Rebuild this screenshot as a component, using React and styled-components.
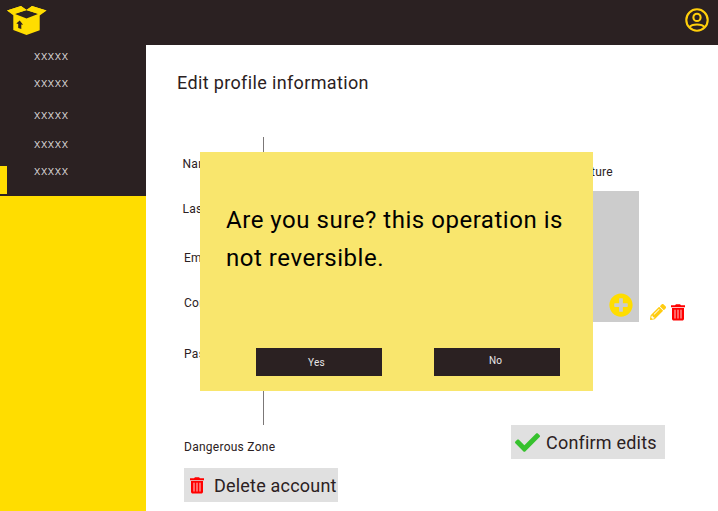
import React from "react";
import styled, { createGlobalStyle } from "styled-components";
import { FaPlusCircle, FaPencilAlt, FaCheck } from "react-icons/fa";

const GlobalStyle = createGlobalStyle`
  *, *::before, *::after { box-sizing: border-box; }
  body { margin: 0; background: #fff; font-family: Roboto, "Noto Sans", sans-serif; color: #2b2122; }
  button { font: inherit; color: inherit; border: 0; padding: 0; margin: 0; }
  svg { display: block; flex: none; }
`;

const Page = styled.div`
  position: relative;
  width: 718px;
  height: 511px;
  display: grid;
  grid-template: 44.6px 1fr / 146px 1fr;
  overflow: hidden;
  background: #fff;
`;

const Header = styled.header`
  grid-column: 1 / -1;
  display: flex;
  justify-content: space-between;
  align-items: flex-start;
  padding: 5px 9px 0 6px;
  background: #2b2122;
`;

const Sidebar = styled.aside`
  background: #ffdd00;
`;

const Nav = styled.nav`
  display: flex;
  flex-direction: column;
  height: 151.4px;
  padding-top: 2px;
  background: #2b2122;
`;

const NavItem = styled.a`
  flex: none;
  height: ${(p) => p.$height}px;
  padding-left: ${(p) => (p.$active ? 27 : 34)}px;
  border-left: ${(p) => (p.$active ? "7px solid #ffdd00" : "0")};
  color: #e6e3e3;
  font-size: 13px;
  line-height: ${(p) => (p.$active ? 10 : 18)}px;
  font-weight: 300;
  letter-spacing: 0.6px;
`;

const Main = styled.main`
  display: grid;
  grid-template-rows: 92.4px 288px 1fr;
  min-width: 0;
`;

const Title = styled.h1`
  margin: 0;
  padding: 26px 0 0 31px;
  font-size: 18px;
  line-height: 24px;
  font-weight: 400;
  letter-spacing: 0.36px;
`;

const Profile = styled.section`
  display: flex;
`;

const Labels = styled.div`
  width: 118px;
  padding-top: 17px;
  border-right: 1px solid #7b7777;
`;

const Label = styled.div`
  height: ${(p) => p.$height}px;
  padding-left: ${(p) => p.$indent}px;
  font-size: 12px;
  line-height: 20px;
  letter-spacing: 0.3px;
  white-space: nowrap;
`;

const PictureColumn = styled.div`
  width: 130px;
  margin-left: 245px;
  padding-top: 25px;
`;

const PictureLabel = styled.div`
  height: 29px;
  padding-right: 26px;
  font-size: 12px;
  line-height: 20px;
  letter-spacing: 0.3px;
  text-align: right;
`;

const Picture = styled.div`
  display: flex;
  justify-content: flex-end;
  align-items: flex-end;
  height: 131px;
  padding: 0 6px 5px;
  background: #cccccc;
  color: #ffdd00;
`;

const PictureActions = styled.div`
  display: flex;
  align-items: flex-end;
  gap: 5px;
  height: 184px;
  margin-left: 11px;
  color: #ffcc10;

  svg:first-child { margin-bottom: 1px; }
`;

const Footer = styled.footer`
  display: flex;
  align-items: flex-start;
  padding-left: 38px;
`;

const DangerZone = styled.div`
  width: 327px;
`;

const DangerTitle = styled.div`
  height: 43px;
  padding-top: 12px;
  font-size: 12px;
  line-height: 20px;
  letter-spacing: 0.26px;
`;

const ActionButton = styled.button`
  display: flex;
  align-items: center;
  gap: ${(p) => p.$gap}px;
  width: 154px;
  height: 34.5px;
  padding-left: ${(p) => p.$inset}px;
  background: #e0e0e0;
  font-size: 18px;
  white-space: nowrap;
  letter-spacing: ${(p) => p.$tracking}px;

  span { padding-top: 1px; }
`;

const Dialog = styled.div`
  position: absolute;
  left: 200px;
  top: 151.6px;
  width: 392.7px;
  height: 239px;
  padding: 49px 24px 0 26px;
  background: #f9e66d;
`;

const Message = styled.p`
  margin: 0;
  height: 147.4px;
  color: #000;
  font-size: 24px;
  line-height: 38px;
  letter-spacing: 0.53px;
  white-space: nowrap;
`;

const DialogActions = styled.div`
  display: flex;
  gap: 52px;
  padding-left: 30px;
`;

const DialogButton = styled.button`
  width: 126px;
  height: 28.5px;
  padding: 0 ${(p) => p.$right}px ${(p) => p.$bottom}px 0;
  background: #2b2122;
  color: #e8e6e6;
  font-size: 10px;
  letter-spacing: 0.2px;
`;

const BoxLogo = () => (
  <svg width="41" height="31" viewBox="0 0 41 31">
    <path fill="#ffdd00" d="M1 5.4 15 1l5.5 3.8L26 1l14.5 4.4-6.8 5v14.8L20.5 30 7.3 25V10.2z" />
    <path fill="#2b2122" d="m8.4 8.8 12-3.5 12.2 3.5-12.1 4.6z" />
    <path fill="#ffdd00" d="m1 5.4 14-4.4 5.3 4L7.6 9.4zM40.5 5.4 26 1l-5.2 4 12.6 4.4z" />
    <path fill="#2b2122" d="m13.7 15.4 3.4 4.4-1.8-.3v4.4l-3.1-.8v-4.2l-1.9-.5z" />
  </svg>
);

const UserIcon = () => (
  <svg width="24" height="27" viewBox="0 -3 24 27" fill="none" stroke="#ffcf0b" strokeWidth="2.1">
    <circle cx="12" cy="12" r="10.7" />
    <circle cx="12" cy="9.4" r="3.6" />
    <path d="M4.6 19c1.4-2 3.2-2.5 7.4-2.5s6 .5 7.4 2.5" />
  </svg>
);

const TrashIcon = () => (
  <svg width="14" height="17" viewBox="0 0 14 17">
    <path fill="#ff0000" d="M4 1.2 5 .2h4l1 1h4v2H0v-2zM1 4h12v11.2L12 16.5H2L1 15.2z" />
    <path fill="none" stroke="#ffe3e3" strokeWidth=".9" d="M4 5.7v8.8M7 5.7v8.8M10 5.7v8.8" />
  </svg>
);

const navHeights = [27.5, 31.5, 29, 31.4];
const fields = [
  ["Name", 45, 36.5],
  ["Last name", 49, 36.5],
  ["Email", 45, 38],
  ["Contact", 51, 38],
  ["Password", 30, 38],
];

export default function App() {
  return (
    <>
      <GlobalStyle />
      <Page>
        <Header>
          <BoxLogo />
          <UserIcon />
        </Header>
        <Sidebar>
          <Nav>
            {navHeights.map((height) => (
              <NavItem key={height} $height={height}>xxxxx</NavItem>
            ))}
            <NavItem $height={28.5} $active>xxxxx</NavItem>
          </Nav>
        </Sidebar>
        <Main>
          <Title>Edit profile information</Title>
          <Profile>
            <Labels>
              {fields.map(([name, height, indent]) => (
                <Label key={name} $height={height} $indent={indent}>{name}</Label>
              ))}
            </Labels>
            <PictureColumn>
              <PictureLabel>Profile picture</PictureLabel>
              <Picture><FaPlusCircle size={24} /></Picture>
            </PictureColumn>
            <PictureActions>
              <FaPencilAlt size={16} />
              <TrashIcon />
            </PictureActions>
          </Profile>
          <Footer>
            <DangerZone>
              <DangerTitle>Dangerous Zone</DangerTitle>
              <ActionButton $inset={6} $gap={10} $tracking={0.2}><TrashIcon /><span>Delete account</span></ActionButton>
            </DangerZone>
            <ActionButton $inset={4} $gap={6} $tracking={0.2}><FaCheck size={25} color="#36c12d" /><span>Confirm edits</span></ActionButton>
          </Footer>
        </Main>
        <Dialog role="dialog" aria-modal="true">
          <Message>Are you sure? this operation is<br />not reversible.</Message>
          <DialogActions>
            <DialogButton $right={5} $bottom={0}>Yes</DialogButton>
            <DialogButton $right={3} $bottom={3}>No</DialogButton>
          </DialogActions>
        </Dialog>
      </Page>
    </>
  );
}
